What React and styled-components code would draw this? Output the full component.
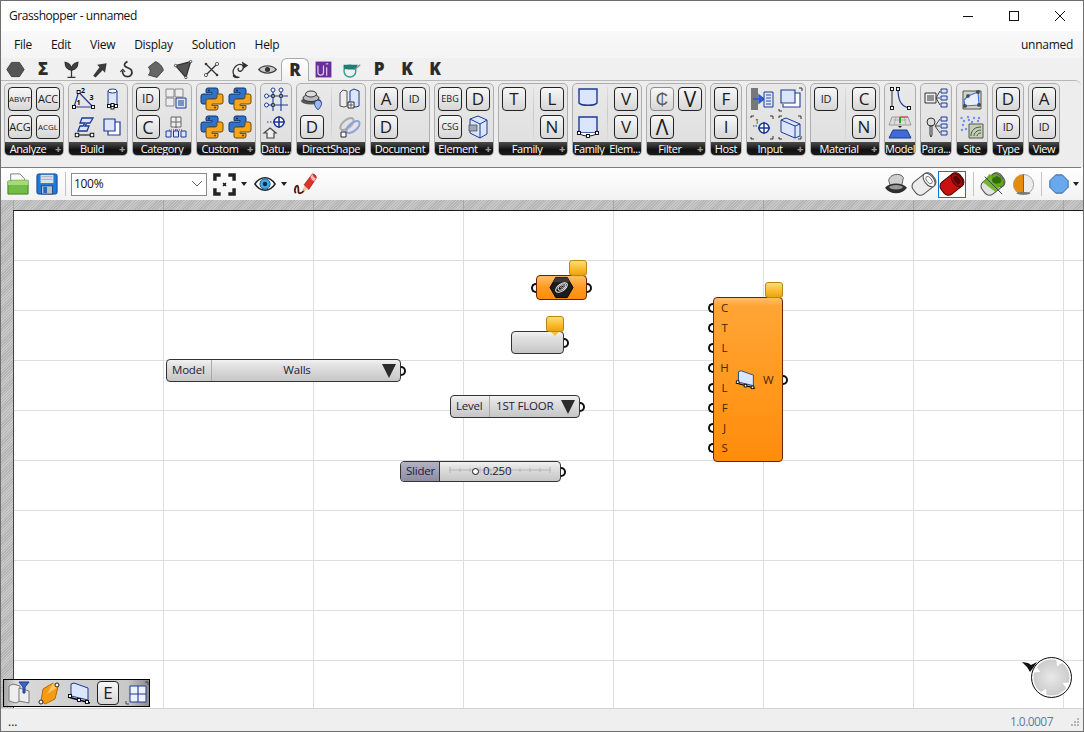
import React from "react";
import styled, { createGlobalStyle } from "styled-components";

const navy = "#1d3a94";
const pale = "#dbe5fb";
const ui = '"Open Sans", "Noto Sans", "Liberation Sans", sans-serif';

const Global = createGlobalStyle`
  html, body { margin: 0; padding: 0; background: #f0f0f0; }
  * { box-sizing: border-box; }
`;

const H = ({ x, y, s = 3 }) => (
  <rect x={x - s / 2} y={y - s / 2} width={s} height={s} fill="#fff" stroke="#000" strokeWidth="0.9" />
);

const Py = () => (
  <>
    <path d="M8 1h8a2 2 0 0 1 2 2v7a2 2 0 0 1-2 2H9a2 2 0 0 0-2 2v3H3a2 2 0 0 1-2-2V9a2 2 0 0 1 2-2h9V5.6H6V3a2 2 0 0 1 2-2z" fill="#2e73c8" stroke="#12356f" />
    <path transform="rotate(180 12 12)" d="M8 1h8a2 2 0 0 1 2 2v7a2 2 0 0 1-2 2H9a2 2 0 0 0-2 2v3H3a2 2 0 0 1-2-2V9a2 2 0 0 1 2-2h9V5.6H6V3a2 2 0 0 1 2-2z" fill="#f7a51c" stroke="#6d4a08" />
    <circle cx="9" cy="3.6" r="1" fill="#10284f" />
    <circle cx="15" cy="20.4" r="1" fill="#5a3c04" />
  </>
);

const Tube = ({ body, end, hole, line }) => (
  <g transform="rotate(-38 12 12)">
    <rect x="-1" y="3.5" width="26" height="17" rx="6" fill={body} stroke={line} strokeWidth="1.2" />
    <ellipse cx="19" cy="12" rx="5" ry="8.5" fill={end} stroke={line} strokeWidth="1.2" />
    <ellipse cx="19" cy="12" rx="2.6" ry="4.6" fill={hole} stroke={line} strokeWidth="0.8" />
  </g>
);

const icons = {
  tri: (
    <>
      <path d="M2 20L6.6 5 21 20z" fill="none" stroke={navy} strokeWidth="1.2" />
      <H x={2} y={20} /><H x={6.6} y={5} /><H x={21} y={20} />
      <text x="9" y="6" fontSize="7" fontWeight="700" fontFamily="Open Sans">2</text>
      <text x="4.5" y="18" fontSize="7" fontWeight="700" fontFamily="Open Sans">1</text>
      <text x="17.5" y="13" fontSize="7" fontWeight="700" fontFamily="Open Sans">3</text>
    </>
  ),
  cyl: (
    <>
      <path d="M8 4v13a4.5 2 0 0 0 9 0V4" fill={pale} stroke={navy} />
      <ellipse cx="12.5" cy="4" rx="4.5" ry="2" fill="#fff" stroke={navy} />
      <H x={9} y={19} /><H x={12.5} y={20.5} /><H x={16} y={19} /><H x={12.5} y={18} />
    </>
  ),
  beam: (
    <>
      <path d="M10 3h11l-3 5h-3l-2 3h4l-2 5H6l2-5h3l2-3H8z" fill={pale} stroke={navy} strokeWidth="1.3" />
      <path d="M5 20h16" stroke="#000" /><H x={5} y={20} s={3.5} /><H x={20} y={20} s={3.5} />
    </>
  ),
  overlap: (
    <>
      <path d="M8 7h12v13H8z" fill="#fff" stroke={navy} strokeWidth="1.2" />
      <path d="M4 4h11v12H4z" fill={pale} stroke={navy} strokeWidth="1.2" />
    </>
  ),
  catList: (
    <>
      <path d="M2 2h8v8H2zM11 2h8v8h-8zM2 11h8v8H2z" fill="#eee" stroke="#888" />
      <path d="M12 11h10v10H12z" fill={pale} stroke={navy} />
      <path d="M14 14h6M14 16h6M14 18h6" stroke={navy} />
    </>
  ),
  catTree: (
    <>
      <path d="M7 2h10v10H7zM12 2v10M7 7h10" fill="#eee" stroke="#666" />
      <path d="M12 12v3M5 15h14" stroke={navy} strokeDasharray="1 1" />
      <path d="M2 16h5v6H2zM9.5 16h5v6h-5zM17 16h5v6h-5z" fill={pale} stroke={navy} />
    </>
  ),
  py: <Py />,
  datumGrid: (
    <>
      <path d="M2 9h22M2 18h22M9 5v19M17 5v19" stroke={navy} strokeWidth="1.1" />
      <circle cx="9" cy="3" r="2" fill="#fff" stroke={navy} />
      <circle cx="17" cy="3" r="2" fill="#fff" stroke={navy} />
      <circle cx="2.5" cy="9" r="2" fill="#fff" stroke={navy} />
      <circle cx="2.5" cy="18" r="2" fill="#fff" stroke={navy} />
      <H x={9} y={9} s={2.4} /><H x={17} y={9} s={2.4} /><H x={9} y={18} s={2.4} />
    </>
  ),
  levelHouse: (
    <>
      <path d="M3 7h6" stroke={navy} strokeDasharray="1.5 1.5" />
      <circle cx="15" cy="7" r="5" fill="#fff" stroke={navy} strokeWidth="1.6" />
      <path d="M15 1v12M9 7h12" stroke={navy} strokeWidth="1.6" />
      <path d="M5 14l6 5H9v5H2v-5H-1z" fill="#eee" stroke="#444" strokeWidth="1.2" transform="translate(1 -1)" />
    </>
  ),
  dome: (
    <>
      <ellipse cx="11" cy="14" rx="10" ry="3.5" fill="#555" />
      <ellipse cx="11" cy="11" rx="8" ry="3.5" fill="#bbb" stroke="#333" />
      <ellipse cx="11" cy="7" rx="5.5" ry="3" fill="#ddd" stroke="#333" />
      <path d="M18 13a3.6 3.6 0 0 1 3.6 3.6c0 2.5-3.6 6.4-3.6 6.4s-3.6-3.9-3.6-6.4A3.6 3.6 0 0 1 18 13z" fill="#9db8ea" stroke={navy} />
    </>
  ),
  wallsPin: (
    <>
      <path d="M2 6l3-3 4 1v15l-3 1-4-1z" fill="#eee" stroke="#555" />
      <path d="M12 4l4-2 5 2v15l-3 1-6-1z" fill={pale} stroke={navy} />
      <path d="M10 15h6v6h-6z" fill="#fff" stroke="#222" /><path d="M12 17h2v2h-2z" fill="none" stroke="#222" strokeWidth=".7" />
    </>
  ),
  ellipses: (
    <>
      <ellipse cx="9" cy="9" rx="8" ry="4" transform="rotate(-40 9 9)" fill="none" stroke="#aaa" strokeWidth="2" />
      <ellipse cx="15" cy="12" rx="8" ry="4" transform="rotate(-40 15 12)" fill="none" stroke="#8aa5dd" strokeWidth="2" />
      <path d="M3 17h5v5H3z" fill="#fff" stroke="#222" />
    </>
  ),
  elemBox: (
    <>
      <path d="M4 4l8-3 9 4v14l-7 4-10-5z" fill={pale} stroke={navy} />
      <path d="M14 23V9l7-4M14 9L4 4" fill="none" stroke={navy} />
      <path d="M3 10h8v6H3z" fill="#9fa8b8" stroke="#444" strokeWidth=".7" />
    </>
  ),
  famTop: (
    <path d="M3 2h18v14c-2 3-16 3-18 0z" fill={pale} stroke={navy} strokeWidth="1.4" />
  ),
  famBot: (
    <>
      <path d="M3 2h18v16H3z" fill={pale} stroke={navy} strokeWidth="1.4" />
      <path d="M3 18c3 4 15 4 18 0" fill="#fff" stroke="#111" />
      <H x={3} y={18} /><H x={21} y={18} /><H x={12} y={21} />
    </>
  ),
  slider: (
    <>
      <path d="M1 1h7v22H1z" fill="#777" />
      <path d="M3 12h9M9 8l5 4-5 4z" fill="#2a5ad0" stroke="#2a5ad0" strokeWidth="1.4" />
      <path d="M14 5h9v15h-9z" fill={pale} stroke={navy} />
      <path d="M16 8h5M16 11h5M16 14h5M16 17h5" stroke={navy} strokeWidth=".9" />
    </>
  ),
  frameBox: (
    <>
      <path d="M1 22v2h3M21 1h3v3" fill="none" stroke="#333" />
      <path d="M8 6h14v14H5V17" fill="#fff" stroke={navy} strokeWidth="1.1" />
      <path d="M3 3h14v13H3z" fill={pale} stroke={navy} strokeWidth="1.1" />
    </>
  ),
  target: (
    <>
      <path d="M1 22v2h3M20 1h3v3M20 24h3v-3M1 3V1h3" fill="none" stroke="#333" />
      <path d="M3 11h5" stroke={navy} strokeDasharray="1.5 1" />
      <circle cx="14" cy="13" r="5" fill="#fff" stroke={navy} strokeWidth="1.6" />
      <path d="M14 7v12M8 13h12" stroke={navy} strokeWidth="1.5" />
      <text x="5" y="9" fontSize="7" fontFamily="Open Sans">1</text>
    </>
  ),
  frameWall: (
    <>
      <path d="M1 22v2h3M20 1h3v3M20 24h3v-3M1 3V1h3" fill="none" stroke="#333" />
      <path d="M3 5l5-2 14 6v12l-5 2-14-6z" fill={pale} stroke={navy} />
      <path d="M17 23V11L3 5M17 11l5-2" fill="none" stroke={navy} />
    </>
  ),
  curve: (
    <>
      <path d="M4 2v19" stroke="#333" /><path d="M10 2c0 10 2 17 11 19" fill="none" stroke={navy} strokeWidth="1.2" />
      <H x={4} y={2} /><H x={4} y={21} /><H x={10} y={2} /><H x={21} y={21} />
    </>
  ),
  plane: (
    <>
      <path d="M4 2h16l3 8H1z" fill="#ddd" stroke="#888" strokeWidth=".8" />
      <path d="M5 5h14M12 2v8M8 2L6 10M16 2l2 8" stroke="#999" strokeWidth=".6" />
      <path d="M12 2h8" stroke="#c33" /><path d="M12 2v6" stroke="#2a2" strokeWidth="2" />
      <path d="M5 15h14l4 8H1z" fill="#3f6ad8" stroke={navy} />
      <path d="M10 11h4l-2 2z" fill="#222" />
    </>
  ),
  paramList: (
    <>
      <path d="M1 6h11v10H1z" fill="#eee" stroke="#333" />
      <path d="M3 9h7M3 11h7M3 13h7" stroke="#333" />
      <path d="M12 11l4-7M12 11h4M12 11l4 7" stroke="#444" />
      <path d="M17 2h6v4h-6zM17 9h6v4h-6zM17 16h6v4h-6z" fill={pale} stroke={navy} />
    </>
  ),
  keyList: (
    <>
      <circle cx="7" cy="7" r="4" fill="#ddd" stroke="#333" />
      <path d="M6 11h2v9l-1 2-1-2z" fill="#ddd" stroke="#333" />
      <path d="M11 11l5-7M11 11h5M11 11l5 7" stroke="#444" />
      <path d="M17 2h6v4h-6zM17 9h6v4h-6zM17 16h6v4h-6z" fill={pale} stroke={navy} />
    </>
  ),
  sitePlan: (
    <>
      <path d="M3 4h18v18H3z" fill="#cfd6c4" stroke="#555" />
      <path d="M8 9l10-4 1 13-14 1-1-6z" fill="#e8eefc" stroke="#3b6fe0" strokeWidth="1.1" />
      <H x={8} y={9} s={2} /><H x={18} y={5} s={2} /><H x={19} y={18} s={2} /><H x={5} y={19} s={2} />
    </>
  ),
  siteTopo: (
    <>
      <path d="M9 9h14v14H9z" fill="#c6ceb8" stroke="#555" />
      <path d="M11 21c0-6 4-9 10-9M14 21c0-3 3-6 7-6M17 21c0-2 2-3 4-3" fill="none" stroke="#3d5c3a" />
      <g fill="#6f92e8">
        <circle cx="4" cy="6" r="1.2" /><circle cx="9" cy="5" r="1.2" /><circle cx="14" cy="3" r="1.2" /><circle cx="19" cy="3" r="1.2" /><circle cx="1.5" cy="3" r="1.2" /><circle cx="8" cy="2" r="1.2" /><circle cx="3" cy="10" r="1.2" /><circle cx="6" cy="14" r="1.2" /><circle cx="2" cy="15" r="1.2" /><circle cx="12" cy="7" r="1.2" /><circle cx="18" cy="6" r="1.2" />
      </g>
    </>
  ),
  hex: <path d="M7 3h10l6 9-6 9H7l-6-9z" fill="#555" stroke="#333" />,
  sprout: (
    <path d="M12 22v-9M4 3c0 7 4 9 8 10 0-5-3-9-8-10zM20 3c0 7-4 9-8 10 0-5 3-9 8-10zM7 22h10" fill="#444" stroke="#333" strokeWidth="1.6" />
  ),
  arrow: <path d="M4 20l3 2 9-9 3 3 2-12-12 2 3 3z" fill="#3a3a3a" />,
  hook: (
    <>
      <path d="M12 2c-3 1-5 4-3 6s6 2 8 5c2 4-1 8-5 8s-7-3-6-7" fill="none" stroke="#333" strokeWidth="2.2" />
      <path d="M3 15l3-3 3 3" fill="none" stroke="#333" strokeWidth="1.6" />
    </>
  ),
  patch: <path d="M3 9l9-7c5 2 9 6 10 11l-8 9-11-3c3-3 3-7 0-10z" fill="#666" stroke="#333" />,
  triTool: (
    <>
      <path d="M2 7l19-5-6 20z" fill="#555" stroke="#333" strokeWidth="1.6" />
      <circle cx="2" cy="7" r="1.5" fill="#fff" stroke="#333" /><circle cx="21" cy="2" r="1.5" fill="#fff" stroke="#333" /><circle cx="15" cy="22" r="1.5" fill="#fff" stroke="#333" />
    </>
  ),
  cross: (
    <>
      <path d="M5 5l14 14M19 5L5 19" stroke="#333" strokeWidth="1.6" />
      <circle cx="5" cy="19" r="2" fill="#fff" stroke="#333" /><circle cx="19" cy="5" r="2" fill="#fff" stroke="#333" /><circle cx="5" cy="5" r="1.6" fill="#333" /><circle cx="19" cy="19" r="1.6" fill="#333" />
    </>
  ),
  spiral: (
    <>
      <path d="M12 22c-6 0-9-5-8-9s6-9 11-7c3 2 2 7-1 8s-5-2-3-4M5 18c-2 3 2 5 5 4" fill="none" stroke="#333" strokeWidth="1.7" />
      <path d="M15 2l8 5-6 4z" fill="#333" />
    </>
  ),
  eyeGray: (
    <>
      <path d="M1 12c5-6 17-6 22 0-5 6-17 6-22 0z" fill="#ccc" stroke="#444" strokeWidth="1.6" />
      <circle cx="12" cy="12" r="3.2" fill="#333" />
    </>
  ),
  ui: (
    <>
      <rect x="2" y="2" width="20" height="20" fill="#6a2d9c" />
      <path d="M5 7v9c0 4 7 4 7 0V7M16 9v11M15 5h3" fill="none" stroke="#d9c6ee" strokeWidth="1.6" />
    </>
  ),
  teal: (
    <>
      <circle cx="10" cy="14" r="7.5" fill="none" stroke="#2a9d8f" strokeWidth="1.7" />
      <path d="M2 6h18l-3 6H8l-6-1z" fill="#1b7f71" />
      <path d="M16 12l7-6" stroke="#888" strokeWidth="1.6" />
    </>
  ),
  hexDark: (
    <>
      <path d="M6 1.5h12l6 10.5-6 10.5H6L0 12z" fill="#1c1c1c" stroke="#000" />
      <path d="M6 1.5h12l3 5H3z" fill="#3a3a3a" />
      <ellipse cx="12" cy="12" rx="7" ry="3.6" transform="rotate(-35 12 12)" fill="none" stroke="#e8e8e8" strokeWidth="1.1" />
      <ellipse cx="12.5" cy="11.5" rx="4.6" ry="2.3" transform="rotate(-35 12.5 11.5)" fill="none" stroke="#e8e8e8" strokeWidth="1" />
      <ellipse cx="13" cy="11" rx="2.2" ry="1.1" transform="rotate(-35 13 11)" fill="none" stroke="#bbb" strokeWidth=".9" />
    </>
  ),
  folder: (
    <>
      <path d="M4 12V1h10l5 5v6z" fill="#fafafa" stroke="#777" />
      <path d="M1 9l5-1h17v15H1z" fill="#74bb48" stroke="#3c7a20" />
      <path d="M1 9l5-1h17v5H1z" fill="#a4da7a" />
    </>
  ),
  save: (
    <>
      <rect x="1" y="1" width="22" height="22" rx="2" fill="#2079d8" stroke="#0f3e8a" />
      <rect x="5" y="2" width="14" height="9" fill="#dde0e4" />
      <path d="M6 4h12M6 7h12" stroke="#aab" />
      <rect x="6" y="14" width="12" height="9" fill="#b8c0c8" stroke="#2a4a7a" />
      <rect x="8" y="15" width="4" height="7" fill="#2168b8" />
    </>
  ),
  focus: (
    <>
      <path d="M2 8V2h6M16 2h6v6M22 16v6h-6M8 22H2v-6" fill="none" stroke="#222" strokeWidth="3.6" />
      <path d="M10.5 10.5l3 3M13.5 10.5l-3 3" stroke="#222" strokeWidth="1.7" />
    </>
  ),
  eyeBlue: (
    <>
      <path d="M1 12c6-9 16-9 22 0-6 9-16 9-22 0z" fill="#fff" stroke="#222" strokeWidth="1.6" />
      <circle cx="12" cy="12" r="5.6" fill="#45a7e0" stroke="#0f5f9f" />
      <circle cx="12" cy="12" r="2.4" fill="#0a2a4a" />
    </>
  ),
  pen: (
    <>
      <path d="M2 22c-3-4 1-9 2-8 2 2-1 9 3 8 4-1 5-5 6-8" fill="none" stroke="#5a1a12" strokeWidth="2" />
      <path d="M11 13L20 1c3 0 5 3 4 5l-8 12z" fill="#e2332b" stroke="#8a1510" strokeWidth=".8" />
      <path d="M20 1c1 3 2 4 4 5l-2 3c-2-1-4-3-4-5z" fill="#f7b9b5" />
      <path d="M11 13l5 5-6 2z" fill="#eec9a0" />
    </>
  ),
  ghost: (
    <>
      <path d="M4 8C5 1 17-1 20 5l-2 10H6z" fill="#cfcfcf" stroke="#555" />
      <path d="M0 16c6-6 18-6 24 0-6 8-18 8-24 0z" fill="#2e2e2e" />
      <ellipse cx="12" cy="15.5" rx="7.5" ry="2.4" fill="#9a9a9a" />
    </>
  ),
  tubeWire: <Tube body="#ececec" end="#fafafa" hole="#fff" line="#555" />,
  tubeRed: <Tube body="#cb1010" end="#a10b0b" hole="#5a0505" line="#4d0505" />,
  tubeGreen: (
    <>
      <Tube body="#e2e2e2" end="#63ad12" hole="#2f6c0a" line="#555" />
      <path d="M8 1L24 8 15 21 1 10z" fill="#63ad12" opacity=".85" />
      <ellipse cx="16" cy="8" rx="5" ry="3.6" fill="#2f6c0a" />
      <path d="M3 4l19 19" stroke="#333" />
    </>
  ),
  ball: (
    <>
      <circle cx="12" cy="12" r="11.5" fill="#ececec" stroke="#999" />
      <path d="M12 .5a11.5 11.5 0 0 0 0 23z" fill="#e88a12" />
      <path d="M12 .5v23" stroke="#555" />
      <ellipse cx="12" cy="22" rx="8" ry="1.5" fill="#777" />
    </>
  ),
  blueBall: <path d="M8 1h8l7 7v8l-7 7H8l-7-7V8z" fill="#68a8ec" stroke="#20508f" strokeLinejoin="round" />,
  wallNode: (
    <>
      <path d="M4 3l3-1 14 5v12L4 15z" fill={pale} stroke={navy} />
      <path d="M1 16l22 6" stroke="#000" strokeWidth="1.3" />
      <H x={3} y={15} /><H x={12} y={19} /><H x={20} y={21} />
    </>
  ),
  wallsFilter: (
    <>
      <path d="M2 5l4-2 7 2v15l-4 2-7-2z" fill="#eee" stroke="#777" />
      <path d="M12 7l10 3v12l-10-2z" fill="#eee" stroke="#777" />
      <path d="M12 1h10l-4 5v6h-2V6z" fill="#3566c9" stroke={navy} />
    </>
  ),
  orangeBox: (
    <>
      <path d="M6 8l10-6 5 4-3 12-10 5-4-3z" fill="#f59a16" stroke="#b86b00" />
      <path d="M16 2l5 4-11 7z" fill="#ffc260" />
      <circle cx="20" cy="4" r="2" fill="#fff" stroke="#222" /><circle cx="4" cy="21" r="2" fill="#fff" stroke="#222" />
    </>
  ),
  grid4: (
    <>
      <path d="M5 5h16v16H5z" fill="#eef2fd" stroke={navy} strokeWidth="1" />
      <path d="M13 5v16M5 13h16" stroke={navy} strokeWidth="1.1" />
      <path d="M20 1h3v3M1 20v3h3" fill="none" stroke="#444" />
    </>
  ),
};

const Icon = ({ name, size = 24 }) => (
  <svg width={size} height={size} viewBox="0 0 24 24" style={{ display: "block", overflow: "visible" }}>
    {icons[name]}
  </svg>
);

const groups = [
  { label: "Analyze", plus: true, cols: [[{ t: "ABWT", s: 8 }, { t: "ACG", s: 11 }], [{ t: "ACC", s: 11 }, { t: "ACGL", s: 8 }]] },
  { label: "Build", plus: true, cols: [[{ i: "tri" }, { i: "beam" }], [{ i: "cyl" }, { i: "overlap" }]] },
  { label: "Category", cols: [[{ t: "ID", s: 12 }, { t: "C", s: 18 }], [{ i: "catList" }, { i: "catTree" }]] },
  { label: "Custom", plus: true, cols: [[{ i: "py" }, { i: "py" }], [{ i: "py" }, { i: "py" }]] },
  { label: "Datu...", cols: [[{ i: "datumGrid" }, { i: "levelHouse" }]] },
  { label: "DirectShape", split: true, cols: [[{ i: "dome" }, { t: "D", s: 17 }], [{ i: "wallsPin" }, { i: "ellipses" }]] },
  { label: "Document", cols: [[{ t: "A", s: 17 }, { t: "D", s: 17 }], [{ t: "ID", s: 11 }]] },
  { label: "Element", plus: true, cols: [[{ t: "EBG", s: 9 }, { t: "CSG", s: 9 }], [{ t: "D", s: 17 }, { i: "elemBox" }]] },
  { label: "Family", plus: true, split: true, cols: [[{ t: "T", s: 17 }], [{ t: "L", s: 17 }, { t: "N", s: 17 }]] },
  { label: "Family  Elem...", split: true, cols: [[{ i: "famTop" }, { i: "famBot" }], [{ t: "V", s: 17 }, { t: "V", s: 17 }]] },
  { label: "Filter", plus: true, cols: [[{ t: "₵", s: 17, muted: true }, { t: "Λ", s: 21 }], [{ t: "V", s: 21 }]] },
  { label: "Host", cols: [[{ t: "F", s: 17 }, { t: "I", s: 17 }]] },
  { label: "Input", plus: true, cols: [[{ i: "slider" }, { i: "target" }], [{ i: "frameBox" }, { i: "frameWall" }]] },
  { label: "Material", plus: true, split: true, cols: [[{ t: "ID", s: 11 }], [{ t: "C", s: 17 }, { t: "N", s: 17 }]] },
  { label: "Model", cols: [[{ i: "curve" }, { i: "plane" }]] },
  { label: "Para...", cols: [[{ i: "paramList" }, { i: "keyList" }]] },
  { label: "Site", cols: [[{ i: "sitePlan" }, { i: "siteTopo" }]] },
  { label: "Type", cols: [[{ t: "D", s: 17 }, { t: "ID", s: 11 }]] },
  { label: "View", cols: [[{ t: "A", s: 17 }, { t: "ID", s: 11 }]] },
];

const tabs = [
  { i: "hex" }, { t: "Σ" }, { i: "sprout" }, { i: "arrow" }, { i: "hook" }, { i: "patch" }, { i: "triTool" }, { i: "cross" }, { i: "spiral" }, { i: "eyeGray" },
  { t: "R", active: true }, { i: "ui" }, { i: "teal" }, { t: "P" }, { t: "K" }, { t: "K" },
];

const menus = ["File", "Edit", "View", "Display", "Solution", "Help"];
const inputs = ["C", "T", "L", "H", "L", "F", "J", "S"];
const dialMarks = [-64, 26, 116, 206];

const Window = styled.div`
  width: 1084px;
  height: 732px;
  border: 1px solid #6f6f6f;
  display: flex;
  flex-direction: column;
  overflow: hidden;
  background: #f0f0f0;
  color: #111;
  font: 12px/16px ${ui};
`;

const TitleBar = styled.div`
  height: 30px;
  flex: none;
  background: #fff;
  display: flex;
  align-items: center;
  padding-left: 8px;
  letter-spacing: -0.42px;
`;

const Title = styled.div`
  flex: 1;
`;

const WinButton = styled.div`
  width: 46px;
  height: 30px;
  display: flex;
  align-items: center;
  justify-content: center;
`;

const MenuBar = styled.div`
  height: 27px;
  flex: none;
  display: flex;
  align-items: center;
  gap: 19px;
  padding: 0 10px 0 13px;
  background: linear-gradient(#f9f9f9, #f4f4f4);
  letter-spacing: -0.28px;
`;

const DocName = styled.div`
  margin-left: auto;
`;

const TabRow = styled.div`
  height: 22px;
  flex: none;
  display: flex;
  background: #f0f0f0;
  position: relative;
  z-index: 1;
`;

const Tab = styled.div`
  width: 28px;
  height: ${(p) => (p.$active ? 23 : 22)}px;
  display: flex;
  align-items: center;
  justify-content: center;
  font: 800 17px/20px "Open Sans", sans-serif;
  color: #2b2b2b;
  ${(p) =>
    p.$active &&
    `background: linear-gradient(#fff, #f0f0f0);
     border: 1px solid #a9a9a9;
     border-bottom: none;
     border-radius: 6px 6px 0 0;`}
`;

const Ribbon = styled.div`
  height: 88px;
  flex: none;
  display: flex;
  gap: 4px;
  padding: 2px 0 0 3px;
  margin-right: 2px;
  background: #ededed;
  border-top: 1px solid #b7b7b7;
  border-bottom: 1px solid #7d7d7d;
  border-top-right-radius: 6px;
`;

const Group = styled.div`
  width: ${(p) => p.$w}px;
  height: 73px;
  border: 1px solid #aeaeae;
  border-radius: 5px;
  background: linear-gradient(#e9e9e9, #dedede);
  display: flex;
  flex-direction: column;
  overflow: hidden;
`;

const GroupBody = styled.div`
  flex: 1;
  display: flex;
  justify-content: space-between;
  padding: 3px 3px 0;
`;

const Col = styled.div`
  display: flex;
  flex-direction: column;
  gap: 4px;
  width: 24px;
`;

const Split = styled.div`
  width: 1px;
  margin-bottom: 2px;
  background: linear-gradient(#dcdcdc, #c8c8c8 50%, #dcdcdc);
`;

const Inner = styled.div`
  display: flex;
  gap: 4px;
  justify-content: space-between;
  width: 100%;
`;

const Btn = styled.div`
  width: 24px;
  height: 24px;
  border: 1px solid ${(p) => (p.$muted ? "#8c8c8c" : "#222")};
  border-radius: 4px;
  background: linear-gradient(#f7f7f7, #d6d6d6);
  display: flex;
  align-items: center;
  justify-content: center;
  font-size: ${(p) => p.$s}px;
  line-height: 22px;
  letter-spacing: ${(p) => (p.$s < 12 && p.$s > 9 ? -0.2 : 0)}px;
  color: ${(p) => (p.$muted ? "#555" : "#1c1c1c")};
  font-family: ${(p) => (p.$muted ? '"DejaVu Sans", sans-serif' : ui)};
  font-weight: ${(p) => (p.$muted ? 200 : 400)};
  white-space: nowrap;
`;

const GroupLabel = styled.div`
  height: 13px;
  flex: none;
  padding-right: ${(p) => (p.$plus ? 12 : 0)}px;
  background: linear-gradient(#4d4d4d, #111 60%, #1a1a1a);
  color: #fff;
  font-size: 11px;
  line-height: 13px;
  letter-spacing: -0.4px;
  text-align: center;
  position: relative;
  white-space: pre;
`;

const Plus = styled.span`
  position: absolute;
  right: 2px;
  top: 0;
  color: #9a9a9a;
  font-weight: 800;
  font-size: 11px;
`;

const Toolbar = styled.div`
  height: 32px;
  flex: none;
  display: flex;
  align-items: center;
  padding: 0 4px 0 6px;
  background: linear-gradient(#fff, #f2f2f2);
`;

const ToolBtn = styled.div`
  flex: none;
  display: flex;
  align-items: center;
  justify-content: center;
  width: ${(p) => p.$w || 28}px;
  height: 27px;
  margin-left: ${(p) => p.$ml || 0}px;
  border: 1px solid ${(p) => (p.$on ? "#0078d7" : "transparent")};
  background: ${(p) => (p.$on ? "#fff" : "none")};
`;

const Sep = styled.div`
  width: 1px;
  height: 24px;
  background: #c4c4c4;
  margin: 0 ${(p) => p.$m || 4}px;
`;

const Combo = styled.div`
  width: 136px;
  height: 23px;
  border: 1px solid #8a8a8a;
  background: #fff;
  display: flex;
  align-items: center;
  justify-content: space-between;
  padding: 0 4px 0 2px;
  letter-spacing: -0.3px;
`;

const Caret = styled.div`
  width: 0;
  height: 0;
  flex: none;
  margin-left: ${(p) => p.$ml || 6}px;
  border: 3px solid transparent;
  border-top: 4px solid #222;
  border-bottom: none;
`;

const Spacer = styled.div`
  flex: 1;
`;

const CanvasArea = styled.div`
  flex: 1;
  min-height: 0;
  display: flex;
  padding: 10px 0 0 12px;
  background:
    linear-gradient(90deg, transparent 149px, #a5a5a5 149px, #a5a5a5 150px) 13px 0 / 150px 100%,
    repeating-linear-gradient(135deg, #c9c9c9 0 1px, #b4b4b4 1px 2px);
`;

const Canvas = styled.div`
  flex: 1;
  position: relative;
  border-top: 1px solid #1d1d1d;
  border-left: 1px solid #444;
  background-color: #fff;
  background-image:
    linear-gradient(90deg, transparent 149px, #dedede 149px),
    linear-gradient(transparent 49px, #dedede 49px);
  background-size: 150px 50px;
`;

const Node = styled.div`
  position: absolute;
  left: ${(p) => p.$x - 14}px;
  top: ${(p) => p.$y - 211}px;
  width: ${(p) => p.$w}px;
  height: ${(p) => p.$h}px;
  border: 1px solid #333;
  border-radius: 4px;
  background: linear-gradient(#f2f2f2 0, #e2e2e2 25%, #c6c6c6 100%);
  color: #1b1b3a;
  display: flex;
  align-items: center;
  font-size: 11.5px;
  letter-spacing: -0.2px;
  white-space: nowrap;
`;

const OrangeNode = styled(Node)`
  border-color: #6a2200;
  background: linear-gradient(#ffbe6b 0, #ffa535 8px, #ff9a20 50%, #ff8c0c 100%);
  color: #4a2500;
`;

const HexNode = styled(OrangeNode)`
  justify-content: center;
`;

const WallNode = styled(OrangeNode)`
  align-items: flex-start;
`;

const Inputs = styled.div`
  width: 21px;
  flex: none;
  display: flex;
  flex-direction: column;
`;

const InputRow = styled.div`
  height: 20px;
  line-height: 20px;
  text-align: center;
  position: relative;
`;

const WallCenter = styled.div`
  align-self: center;
  display: flex;
  align-items: center;
  gap: 7px;
  line-height: 12px;
`;

const Port = styled.div`
  position: absolute;
  top: 50%;
  width: 5px;
  height: 10px;
  margin-top: -5px;
  border: 2px solid #111;
  background: #fff;
  ${(p) =>
    p.$left
      ? `left: -6px; border-right: none; border-radius: 5px 0 0 5px;`
      : `right: -6px; border-left: none; border-radius: 0 5px 5px 0;`}
`;

const Bubble = styled.div`
  position: absolute;
  right: -1px;
  top: -16px;
  width: 18px;
  height: 16px;
  border: 1px solid #b9860f;
  border-radius: 3px;
  background: linear-gradient(#ffdc78, #f9b92c 60%, #eba30f);
  z-index: 2;
  &::after {
    content: "";
    position: absolute;
    left: 4px;
    bottom: -5px;
    border: 4px solid transparent;
    border-top: 4px solid #f5c13f;
    border-bottom: none;
  }
`;

const Field = styled.div`
  padding-left: 5px;
  width: ${(p) => p.$w}px;
  height: 100%;
  line-height: 19px;
  border-right: 1px solid #aaa;
  flex: none;
`;

const Value = styled.div`
  flex: 1;
  padding: 0 0 2px ${(p) => p.$pad || 0}px;
  text-align: ${(p) => p.$align || "center"};
`;

const Drop = styled.div`
  flex: none;
  width: 0;
  height: 0;
  margin-right: 4px;
  border-left: 7px solid transparent;
  border-right: 7px solid transparent;
  border-top: 14px solid #2b2b2b;
`;

const SliderLabel = styled.div`
  width: 39px;
  height: 100%;
  flex: none;
  padding-left: 5px;
  line-height: 17px;
  background: linear-gradient(#b3b1c4, #8e8ca2);
  border-right: 1px solid #333;
  border-radius: 3px 0 0 3px;
`;

const Track = styled.div`
  flex: 1;
  height: 100%;
  position: relative;
  line-height: 17px;
  padding-left: 43px;
`;

const TrackLine = styled.svg`
  position: absolute;
  left: 9px;
  top: 4px;
`;

const TrackText = styled.span`
  position: relative;
`;

const Knob = styled.div`
  position: absolute;
  left: 32px;
  top: 6px;
  width: 7px;
  height: 7px;
  border: 1.5px solid #111;
  border-radius: 50%;
  background: #fff;
`;

const Tray = styled.div`
  position: absolute;
  left: -11px;
  bottom: 1px;
  width: 147px;
  height: 28px;
  border: 1px solid #000;
  background: linear-gradient(90deg, #a5a5a5, #dadada 8%, #c8c8c8 85%, #8a8a8a);
  display: flex;
  align-items: center;
  gap: 6px;
  padding-left: 3px;
`;

const Dial = styled.div`
  position: absolute;
  left: 1017px;
  top: 446px;
  width: 41px;
  height: 41px;
  border-radius: 50%;
  border: 1.5px solid #111;
  box-shadow: inset 0 0 0 1.5px #fff;
  background: radial-gradient(circle, #e8e8e8, #bdbdbd);
`;

const DialMarks = styled.svg`
  position: absolute;
  left: -1.5px;
  top: -1.5px;
`;

const DialTick = styled.svg`
  position: absolute;
  left: -10px;
  top: 4px;
`;

const StatusBar = styled.div`
  height: 23px;
  flex: none;
  display: flex;
  align-items: center;
  padding: 3px 4px 0 7px;
  background: #efefef;
  border-top: 1px solid #d4d4d4;
`;

const Version = styled.div`
  margin-left: auto;
  margin-right: 18px;
  color: #5b7da6;
  letter-spacing: -0.55px;
`;

const groupWidth = (g) => (g.cols.length === 1 ? 32 : g.split ? 70 : 60);

const Cell = ({ item }) =>
  item.t ? (
    <Btn $s={item.s} $muted={item.muted}>{item.t}</Btn>
  ) : (
    <Icon name={item.i} />
  );

const RibbonGroup = ({ g }) => (
  <Group $w={groupWidth(g)}>
    <GroupBody>
      <Inner>
        <Col>{g.cols[0].map((c, i) => <Cell key={i} item={c} />)}</Col>
        {g.split && <Split />}
        {g.cols[1] && <Col>{g.cols[1].map((c, i) => <Cell key={i} item={c} />)}</Col>}
      </Inner>
    </GroupBody>
    <GroupLabel $plus={g.plus}>
      {g.label}
      {g.plus && <Plus>+</Plus>}
    </GroupLabel>
  </Group>
);

export default function App() {
  return (
    <>
      <Global />
      <Window>
        <TitleBar>
          <Title>Grasshopper - unnamed</Title>
          <WinButton>
            <svg width="10" height="10"><path d="M0 5.5h10" stroke="#111" /></svg>
          </WinButton>
          <WinButton>
            <svg width="10" height="10"><rect x=".5" y=".5" width="9" height="9" fill="none" stroke="#111" /></svg>
          </WinButton>
          <WinButton>
            <svg width="10" height="10"><path d="M0 0l10 10M10 0L0 10" stroke="#111" /></svg>
          </WinButton>
        </TitleBar>

        <MenuBar>
          {menus.map((m) => <div key={m}>{m}</div>)}
          <DocName>unnamed</DocName>
        </MenuBar>

        <TabRow>
          {tabs.map((t, i) => (
            <Tab key={i} $active={t.active}>
              {t.t ? t.t : <Icon name={t.i} size={19} />}
            </Tab>
          ))}
        </TabRow>

        <Ribbon>
          {groups.map((g) => <RibbonGroup key={g.label} g={g} />)}
        </Ribbon>

        <Toolbar>
          <ToolBtn $w={22}><Icon name="folder" size={22} /></ToolBtn>
          <ToolBtn $w={24} $ml={6}><Icon name="save" size={22} /></ToolBtn>
          <Sep $m={5.5} />
          <Combo>
            100%
            <svg width="10" height="6"><path d="M0 0l5 5 5-5" fill="none" stroke="#666" /></svg>
          </Combo>
          <ToolBtn $w={24} $ml={5}><Icon name="focus" size={23} /></ToolBtn>
          <Caret $ml={5} />
          <ToolBtn $w={24} $ml={6}><Icon name="eyeBlue" size={22} /></ToolBtn>
          <Caret $ml={4} />
          <ToolBtn $w={24} $ml={6}><Icon name="pen" size={22} /></ToolBtn>
          <Spacer />
          <ToolBtn><Icon name="ghost" size={22} /></ToolBtn>
          <ToolBtn><Icon name="tubeWire" size={22} /></ToolBtn>
          <ToolBtn $on><Icon name="tubeRed" size={22} /></ToolBtn>
          <Sep $m={7} />
          <ToolBtn $w={24}><Icon name="tubeGreen" size={22} /></ToolBtn>
          <ToolBtn $w={24} $ml={6}><Icon name="ball" size={21} /></ToolBtn>
          <Sep $m={6} />
          <ToolBtn $w={22}><Icon name="blueBall" size={20} /></ToolBtn>
          <Caret $ml={3} />
        </Toolbar>

        <CanvasArea>
          <Canvas>
            <HexNode $x={536} $y={275} $w={51} $h={25}>
              <Icon name="hexDark" size={23} />
              <Port $left /><Port />
              <Bubble />
            </HexNode>

            <Node $x={511} $y={331} $w={53} $h={23}>
              <Port />
              <Bubble />
            </Node>

            <Node $x={166} $y={359} $w={235} $h={23}>
              <Field $w={45}>Model</Field>
              <Value>Walls</Value>
              <Drop />
              <Port />
            </Node>

            <Node $x={450} $y={395} $w={130} $h={23}>
              <Field $w={39}>Level</Field>
              <Value $align="left" $pad={6}>1ST FLOOR</Value>
              <Drop />
              <Port />
            </Node>

            <Node $x={400} $y={461} $w={161} $h={21}>
              <SliderLabel>Slider</SliderLabel>
              <Track>
                <TrackLine width="102" height="8">
                  <path d="M0 4h102M1 1v6M11 2v4M21 2v4M31 1v6M41 2v4M51 2v4M61 1v6M71 2v4M81 2v4M91 2v4M101 1v6" stroke="#b5b5b5" fill="none" />
                </TrackLine>
                <Knob />
                <TrackText>0.250</TrackText>
              </Track>
              <Port />
            </Node>

            <WallNode $x={713} $y={297} $w={70} $h={165}>
              <Inputs>
                {inputs.map((n, i) => (
                  <InputRow key={i}>
                    {n}
                    <Port $left />
                  </InputRow>
                ))}
              </Inputs>
              <WallCenter>
                <Icon name="wallNode" size={21} />
                W
              </WallCenter>
              <Port />
              <Bubble />
            </WallNode>

            <Tray>
              <Icon name="wallsFilter" />
              <Icon name="orangeBox" />
              <Icon name="wallNode" />
              <Btn $s={17}>E</Btn>
              <Icon name="grid4" />
            </Tray>

            <Dial>
              <DialMarks width="41" height="41" viewBox="-20.5 -20.5 41 41">
                {dialMarks.map((a) => (
                  <path key={a} d="M-3.5 -18.5h7l-3.5 6z" fill="#fff" transform={`rotate(${a})`} />
                ))}
              </DialMarks>
              <DialTick width="18" height="11">
                <path d="M0 0l6 1 3 2 6-3-4 6-3 4-3-5z" fill="#111" />
              </DialTick>
            </Dial>
          </Canvas>
        </CanvasArea>

        <StatusBar>
          ...
          <Version>1.0.0007</Version>
          <svg width="8" height="8"><path d="M6 0h2v2H6zM3 3h2v2H3zM6 3h2v2H6zM0 6h2v2H0zM3 6h2v2H3zM6 6h2v2H6z" fill="#b5b5b5" /></svg>
        </StatusBar>
      </Window>
    </>
  );
}
